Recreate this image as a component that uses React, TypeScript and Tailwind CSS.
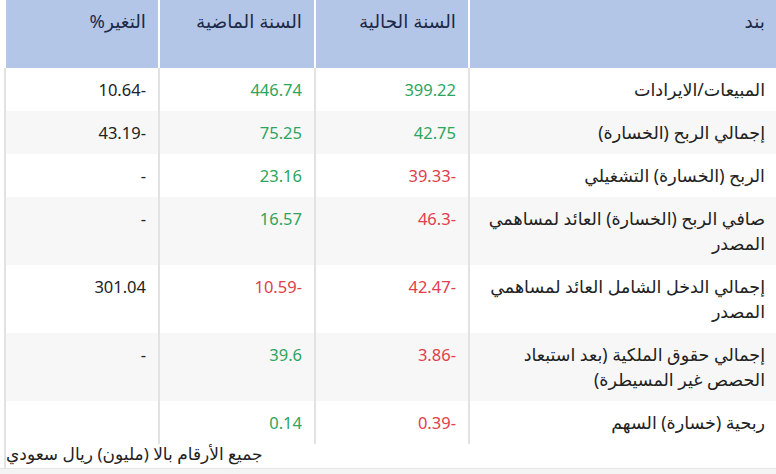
import React from "react";

type Cell = { v: string; c?: "g" | "r" | "n" };
type Row = { label: string; cur: Cell; prev: Cell; chg: string };

const rows: Row[] = [
  { label: "المبيعات/الايرادات", cur: { v: "399.22", c: "g" }, prev: { v: "446.74", c: "g" }, chg: "-10.64" },
  { label: "إجمالي الربح (الخسارة)", cur: { v: "42.75", c: "g" }, prev: { v: "75.25", c: "g" }, chg: "-43.19" },
  { label: "الربح (الخسارة) التشغيلي", cur: { v: "-39.33", c: "r" }, prev: { v: "23.16", c: "g" }, chg: "-" },
  { label: "صافي الربح (الخسارة) العائد لمساهمي المصدر", cur: { v: "-46.3", c: "r" }, prev: { v: "16.57", c: "g" }, chg: "-" },
  { label: "إجمالي الدخل الشامل العائد لمساهمي المصدر", cur: { v: "-42.47", c: "r" }, prev: { v: "-10.59", c: "r" }, chg: "301.04" },
  { label: "إجمالي حقوق الملكية (بعد استبعاد الحصص غير المسيطرة)", cur: { v: "-3.86", c: "r" }, prev: { v: "39.6", c: "g" }, chg: "-" },
  { label: "ربحية (خسارة) السهم", cur: { v: "-0.39", c: "r" }, prev: { v: "0.14", c: "g" }, chg: "" },
];

const color = (c?: string) => (c === "g" ? "text-[#2ea55f]" : c === "r" ? "text-[#e0404c]" : "text-[#222]");

export default function App() {
  return (
    <div className="w-[776px] h-[474px] overflow-hidden bg-white font-['Noto_Sans','DejaVu_Sans',sans-serif] text-[16.5px] text-[#222]">
      <div className="pl-[4px]">
        <table dir="rtl" className="w-[772px] table-fixed border-collapse">
          <colgroup>
            <col className="w-[308px]" />
            <col className="w-[154px]" />
            <col className="w-[156px]" />
            <col className="w-[154px]" />
          </colgroup>
          <thead>
            <tr className="h-[68px] bg-[#b4c6e7] text-[#1c2a48]">
              {["بند", "السنة الحالية", "السنة الماضية", "التغير%"].map((h) => (
                <th key={h} className="align-top text-right font-normal text-[18.5px] px-[12px] pt-[8px] leading-[25px] border-l-2 border-white">
                  {h}
                </th>
              ))}
            </tr>
          </thead>
          <tbody>
            {rows.map((r, i) => (
              <tr key={i} className={i % 2 === 1 ? "bg-[#f7f7f7]" : "bg-white"}>
                <td className="align-top text-right text-[17.5px] px-[12px] py-[9px] leading-[25px] border-l-2 border-[#e2e2e2]">{r.label}</td>
                <td className={`align-top text-right px-[12px] py-[9px] leading-[25px] border-l-2 border-[#e2e2e2] ${color(r.cur.c)}`}>{r.cur.v}</td>
                <td className={`align-top text-right px-[12px] py-[9px] leading-[25px] border-l-2 border-[#e2e2e2] ${color(r.prev.c)}`}>{r.prev.v}</td>
                <td className="align-top text-right px-[12px] py-[9px] leading-[25px] border-l-2 border-[#e2e2e2]">{r.chg}</td>
              </tr>
            ))}
          </tbody>
        </table>
        <div dir="rtl" className="text-left text-[17px] pt-[0px] pb-[4px] leading-[20px] border-l-2 border-[#e2e2e2]">
          جميع الأرقام بالا (مليون) ريال سعودي
        </div>
      </div>
      <div className="h-[20px] border-t border-[#e6e6e6] bg-[#f4f4f4]" />
    </div>
  );
}
